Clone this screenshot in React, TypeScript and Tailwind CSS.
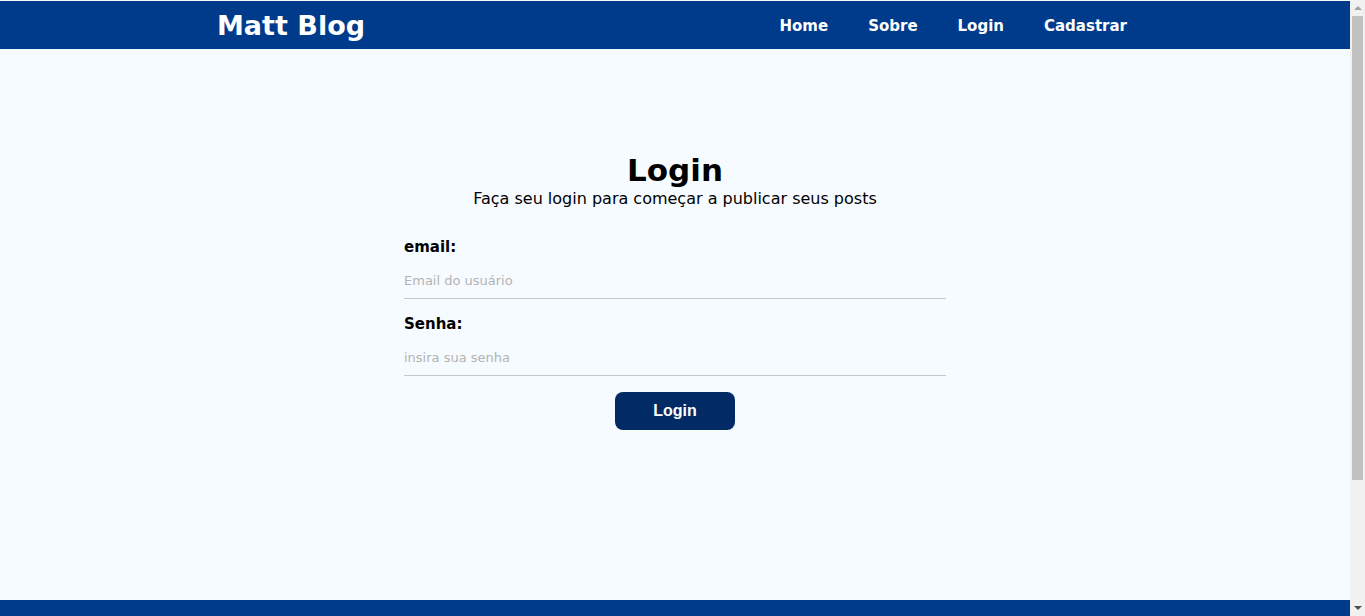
import React from "react";

const App: React.FC = () => {
  return (
    <div className="h-screen overflow-hidden flex bg-[#f6fbff] font-['DejaVu_Sans',sans-serif]">
      <div className="w-[1350px] flex flex-col pt-px">
        {/* Navbar */}
        <nav className="h-12 bg-[#003b8b] flex items-center justify-between pl-[217px] pr-[223px]">
          <span className="text-white font-bold text-[27px] leading-none">Matt Blog</span>
          <div className="mt-0.5 flex items-center gap-10 text-white font-bold text-[15px]">
            <a href="#">Home</a>
            <a href="#">Sobre</a>
            <a href="#">Login</a>
            <a href="#">Cadastrar</a>
          </div>
        </nav>

        {/* Main */}
        <main className="h-[551px] flex flex-col items-center pt-[102px]">
          <h1 className="text-[31px] font-bold leading-[38px] text-black">Login</h1>
          <p className="text-[16px] leading-5 text-black">Faça seu login para começar a publicar seus posts</p>

          <form className="w-[542px] mt-[26px] flex flex-col">
            <label className="font-bold text-[15px] leading-6 text-black">email:</label>
            <input
              type="email"
              placeholder="Email do usuário"
              className="h-10 pt-1 bg-transparent border-b border-[#c8c8c8] text-[13px] outline-none placeholder:text-[#b3b3b3]"
            />
            <label className="mt-[13px] font-bold text-[15px] leading-6 text-black">Senha:</label>
            <input
              type="password"
              placeholder="insira sua senha"
              className="h-10 pt-1 bg-transparent border-b border-[#c8c8c8] text-[13px] outline-none placeholder:text-[#b3b3b3]"
            />
            <button
              type="button"
              className="mt-4 self-center w-[120px] h-[38px] rounded-lg bg-[#022a64] text-white font-bold text-base font-['Liberation_Sans',sans-serif]"
            >
              Login
            </button>
          </form>
        </main>

        {/* Footer */}
        <footer className="flex-1 bg-[#003b8b]"></footer>
      </div>

      {/* Scrollbar */}
      <div className="w-[15px] bg-[#f1f1f1] flex flex-col">
        <div className="h-4 flex items-center justify-center">
          <div className="w-0 h-0 border-x-[4px] border-x-transparent border-b-[4px] border-b-[#a3a3a3]"></div>
        </div>
        <div className="mx-[2px] h-[464px] bg-[#c1c1c1]"></div>
        <div className="flex-1"></div>
        <div className="h-4 flex items-center justify-center">
          <div className="w-0 h-0 border-x-[4px] border-x-transparent border-t-[4px] border-t-[#505050]"></div>
        </div>
      </div>
    </div>
  );
};

export default App;
